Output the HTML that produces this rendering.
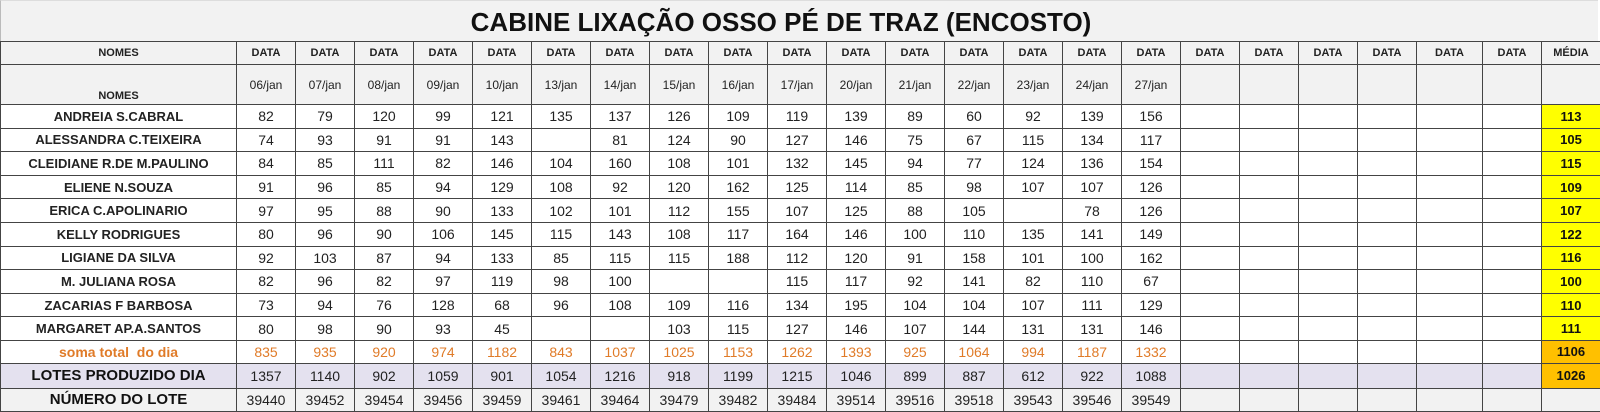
<!DOCTYPE html>
<html><head><meta charset="utf-8"><style>
body{margin:0;background:#fff;width:1600px;height:411px;overflow:hidden;font-family:"Liberation Sans",sans-serif}
.title{position:absolute;left:0;top:0;width:1598px;height:41px;background:#f2f2f2;border-left:1px solid #bbb;border-top:1px solid #ddd;box-sizing:border-box}
.title span{position:absolute;left:0;width:1560px;top:6px;text-align:center;font-weight:bold;font-size:26px;color:#111}
table{position:absolute;left:0;top:41px;border-collapse:collapse;table-layout:fixed;width:1599px}
td{border:1px solid #444;text-align:center;padding:0;font-size:14px;color:#222;white-space:nowrap;overflow:hidden}
tr.h1 td{height:22px;background:#f2f2f2;font-weight:bold;font-size:11px}
tr.h2 td{height:37px;background:#f2f2f2;font-size:12px}
tr.h2 td.n{vertical-align:bottom;padding-bottom:2px;font-weight:bold;font-size:11px}
tr.d td{height:22.6px}
td.n{font-weight:bold;font-size:13px}
tr.s td{color:#e07b28;height:22px}
tr.s td.n{font-size:14px}
tr.l td{background:#e4e1ef;height:24px}
tr.l td.n,tr.u td.n{font-size:15px;color:#111}
tr.u td{background:#f2f2f2;height:22px}
td.y{background:#ffff00 !important;font-weight:bold;font-size:13px !important;color:#111 !important}
td.o{background:#ffc000 !important;font-weight:bold;font-size:13px !important;color:#111 !important}
</style></head><body>
<div class="title"><span>CABINE LIXAÇÃO OSSO PÉ DE TRAZ (ENCOSTO)</span></div>
<table>
<colgroup><col style="width:236px"><col span="16" style="width:59px"><col span="4" style="width:59px"><col style="width:66px"><col style="width:59px"><col style="width:59px"></colgroup>
<tr class="h1"><td>NOMES</td><td>DATA</td><td>DATA</td><td>DATA</td><td>DATA</td><td>DATA</td><td>DATA</td><td>DATA</td><td>DATA</td><td>DATA</td><td>DATA</td><td>DATA</td><td>DATA</td><td>DATA</td><td>DATA</td><td>DATA</td><td>DATA</td><td>DATA</td><td>DATA</td><td>DATA</td><td>DATA</td><td>DATA</td><td>DATA</td><td>MÉDIA</td></tr>
<tr class="h2"><td class="n">NOMES</td><td>06/jan</td><td>07/jan</td><td>08/jan</td><td>09/jan</td><td>10/jan</td><td>13/jan</td><td>14/jan</td><td>15/jan</td><td>16/jan</td><td>17/jan</td><td>20/jan</td><td>21/jan</td><td>22/jan</td><td>23/jan</td><td>24/jan</td><td>27/jan</td><td></td><td></td><td></td><td></td><td></td><td></td><td></td></tr>
<tr class="d"><td class="n">ANDREIA S.CABRAL</td><td>82</td><td>79</td><td>120</td><td>99</td><td>121</td><td>135</td><td>137</td><td>126</td><td>109</td><td>119</td><td>139</td><td>89</td><td>60</td><td>92</td><td>139</td><td>156</td><td></td><td></td><td></td><td></td><td></td><td></td><td class="y">113</td></tr>
<tr class="d"><td class="n">ALESSANDRA C.TEIXEIRA</td><td>74</td><td>93</td><td>91</td><td>91</td><td>143</td><td></td><td>81</td><td>124</td><td>90</td><td>127</td><td>146</td><td>75</td><td>67</td><td>115</td><td>134</td><td>117</td><td></td><td></td><td></td><td></td><td></td><td></td><td class="y">105</td></tr>
<tr class="d"><td class="n">CLEIDIANE R.DE M.PAULINO</td><td>84</td><td>85</td><td>111</td><td>82</td><td>146</td><td>104</td><td>160</td><td>108</td><td>101</td><td>132</td><td>145</td><td>94</td><td>77</td><td>124</td><td>136</td><td>154</td><td></td><td></td><td></td><td></td><td></td><td></td><td class="y">115</td></tr>
<tr class="d"><td class="n">ELIENE N.SOUZA</td><td>91</td><td>96</td><td>85</td><td>94</td><td>129</td><td>108</td><td>92</td><td>120</td><td>162</td><td>125</td><td>114</td><td>85</td><td>98</td><td>107</td><td>107</td><td>126</td><td></td><td></td><td></td><td></td><td></td><td></td><td class="y">109</td></tr>
<tr class="d"><td class="n">ERICA C.APOLINARIO</td><td>97</td><td>95</td><td>88</td><td>90</td><td>133</td><td>102</td><td>101</td><td>112</td><td>155</td><td>107</td><td>125</td><td>88</td><td>105</td><td></td><td>78</td><td>126</td><td></td><td></td><td></td><td></td><td></td><td></td><td class="y">107</td></tr>
<tr class="d"><td class="n">KELLY RODRIGUES</td><td>80</td><td>96</td><td>90</td><td>106</td><td>145</td><td>115</td><td>143</td><td>108</td><td>117</td><td>164</td><td>146</td><td>100</td><td>110</td><td>135</td><td>141</td><td>149</td><td></td><td></td><td></td><td></td><td></td><td></td><td class="y">122</td></tr>
<tr class="d"><td class="n">LIGIANE DA SILVA</td><td>92</td><td>103</td><td>87</td><td>94</td><td>133</td><td>85</td><td>115</td><td>115</td><td>188</td><td>112</td><td>120</td><td>91</td><td>158</td><td>101</td><td>100</td><td>162</td><td></td><td></td><td></td><td></td><td></td><td></td><td class="y">116</td></tr>
<tr class="d"><td class="n">M. JULIANA ROSA</td><td>82</td><td>96</td><td>82</td><td>97</td><td>119</td><td>98</td><td>100</td><td></td><td></td><td>115</td><td>117</td><td>92</td><td>141</td><td>82</td><td>110</td><td>67</td><td></td><td></td><td></td><td></td><td></td><td></td><td class="y">100</td></tr>
<tr class="d"><td class="n">ZACARIAS F BARBOSA</td><td>73</td><td>94</td><td>76</td><td>128</td><td>68</td><td>96</td><td>108</td><td>109</td><td>116</td><td>134</td><td>195</td><td>104</td><td>104</td><td>107</td><td>111</td><td>129</td><td></td><td></td><td></td><td></td><td></td><td></td><td class="y">110</td></tr>
<tr class="d"><td class="n">MARGARET AP.A.SANTOS</td><td>80</td><td>98</td><td>90</td><td>93</td><td>45</td><td></td><td></td><td>103</td><td>115</td><td>127</td><td>146</td><td>107</td><td>144</td><td>131</td><td>131</td><td>146</td><td></td><td></td><td></td><td></td><td></td><td></td><td class="y">111</td></tr>
<tr class="s"><td class="n">soma total&nbsp; do dia</td><td>835</td><td>935</td><td>920</td><td>974</td><td>1182</td><td>843</td><td>1037</td><td>1025</td><td>1153</td><td>1262</td><td>1393</td><td>925</td><td>1064</td><td>994</td><td>1187</td><td>1332</td><td></td><td></td><td></td><td></td><td></td><td></td><td class="o">1106</td></tr>
<tr class="l"><td class="n">LOTES PRODUZIDO DIA</td><td>1357</td><td>1140</td><td>902</td><td>1059</td><td>901</td><td>1054</td><td>1216</td><td>918</td><td>1199</td><td>1215</td><td>1046</td><td>899</td><td>887</td><td>612</td><td>922</td><td>1088</td><td></td><td></td><td></td><td></td><td></td><td></td><td class="o">1026</td></tr>
<tr class="u"><td class="n">NÚMERO DO LOTE</td><td>39440</td><td>39452</td><td>39454</td><td>39456</td><td>39459</td><td>39461</td><td>39464</td><td>39479</td><td>39482</td><td>39484</td><td>39514</td><td>39516</td><td>39518</td><td>39543</td><td>39546</td><td>39549</td><td></td><td></td><td></td><td></td><td></td><td></td><td></td></tr>
</table>
</body></html>
